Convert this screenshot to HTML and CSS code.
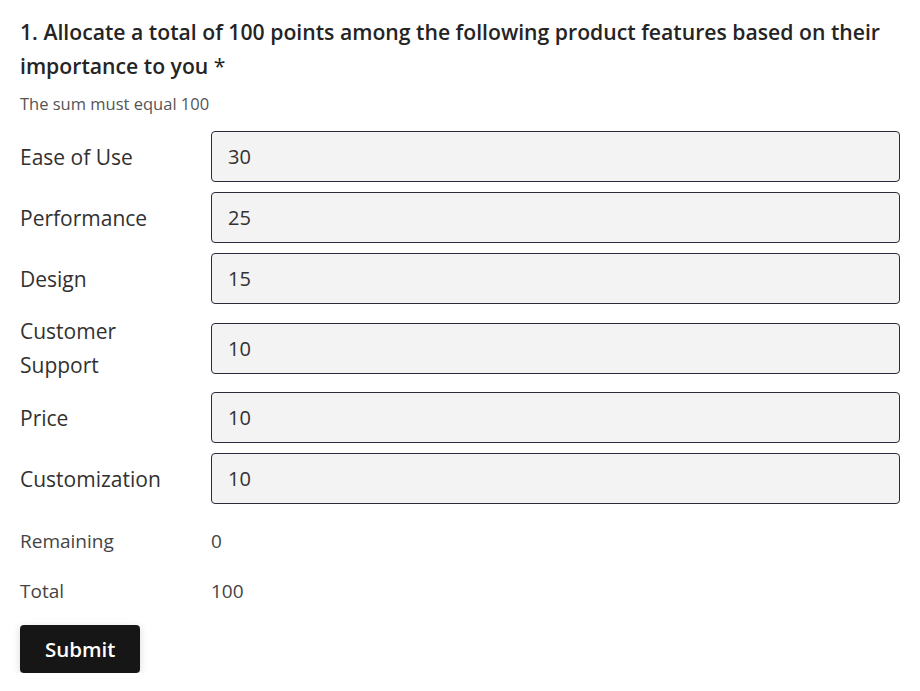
FILE: index.html
```html
<!DOCTYPE html>
<html lang="en">
<head>
<meta charset="utf-8">
<title>Constant sum question</title>
<link rel="stylesheet" href="styles.css">
</head>
<body>
<form class="question">
  <h1 class="title">1. Allocate a total of 100 points among the following product features based on their importance to you <span class="req">*</span></h1>
  <p class="hint">The sum must equal 100</p>
  <div class="rows">
    <div class="row"><label class="label">Ease of Use</label><input class="field" type="text" value="30"></div>
    <div class="row"><label class="label">Performance</label><input class="field" type="text" value="25"></div>
    <div class="row"><label class="label">Design</label><input class="field" type="text" value="15"></div>
    <div class="row"><label class="label">Customer Support</label><input class="field" type="text" value="10"></div>
    <div class="row"><label class="label">Price</label><input class="field" type="text" value="10"></div>
    <div class="row"><label class="label">Customization</label><input class="field" type="text" value="10"></div>
  </div>
  <div class="stat"><span class="stat-label">Remaining</span><span class="stat-value">0</span></div>
  <div class="stat"><span class="stat-label">Total</span><span class="stat-value">100</span></div>
  <button class="submit" type="button">Submit</button>
</form>
</body>
</html>
```
FILE: styles.css
```css
html, body {
  margin: 0;
  padding: 0;
  background: #ffffff;
}
body {
  font-family: "Open Sans", "Noto Sans", "Liberation Sans", sans-serif;
  color: #242424;
}
.question {
  padding: 15px 20px 0 20px;
  width: 880px;
}
.title {
  margin: 0;
  font-size: 21.2px;
  font-weight: 600;
  line-height: 34px;
  color: #242424;
}
.req {
  font-weight: 400;
}
.hint {
  margin: 10px 0 0 0;
  font-size: 16.5px;
  line-height: 22px;
  color: #555555;
}
.rows {
  margin-top: 16px;
  display: flex;
  flex-direction: column;
  gap: 10px;
}
.row {
  display: flex;
  align-items: center;
  gap: 36px;
}
.label {
  width: 155px;
  flex: none;
  font-size: 21px;
  line-height: 34px;
  color: #323130;
}
.field {
  flex: 1;
  height: 51px;
  box-sizing: border-box;
  margin: 0;
  border: 1px solid #2b2b3c;
  border-radius: 4px;
  background: #f3f3f3;
  padding: 0 16px;
  font-family: inherit;
  font-size: 20px;
  color: #323130;
}
.stat {
  display: flex;
  align-items: center;
  height: 50px;
  font-size: 19px;
  color: #444444;
}
.rows + .stat {
  margin-top: 12px;
}
.stat-label {
  width: 191px;
  flex: none;
}
.submit {
  margin-top: 9px;
  height: 48px;
  padding: 0 25px;
  border: none;
  border-radius: 4px;
  background: #161616;
  color: #ffffff;
  font-family: inherit;
  font-size: 20.5px;
  font-weight: 600;
  box-shadow: 0 2px 8px rgba(0, 0, 0, 0.15);
}
```
